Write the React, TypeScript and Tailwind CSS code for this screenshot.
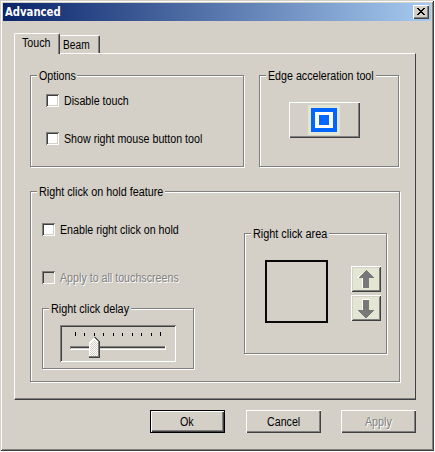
import type { ReactNode } from "react";
import clsx from "clsx";

const raised =
  "shadow-[inset_1px_1px_0_#fff,inset_-1px_-1px_0_#404040,inset_-2px_-2px_0_#808080]";

function Label({
  children,
  scale = "scale-x-[0.89]",
  disabled,
}: {
  children: string;
  scale?: string;
  disabled?: boolean;
}) {
  return (
    <span
      className={clsx(
        "block origin-left whitespace-nowrap leading-[14px]",
        scale,
        disabled && "text-[#808080] [text-shadow:1px_1px_0_#fff]",
      )}
    >
      {children}
    </span>
  );
}

function GroupBox({
  title,
  titleWidth,
  titleScale,
  className,
  children,
}: {
  title: string;
  titleWidth: string;
  titleScale?: string;
  className: string;
  children?: ReactNode;
}) {
  return (
    <fieldset
      className={clsx(
        "relative shrink-0 border border-[#808080] shadow-[1px_1px_0_#fff,inset_1px_1px_0_#fff]",
        className,
      )}
    >
      <div
        className={clsx(
          "absolute -top-[7px] left-[6px] h-[14px] bg-[#d4d0c8] pl-[2px]",
          titleWidth,
        )}
      >
        <Label scale={titleScale}>{title}</Label>
      </div>
      {children}
    </fieldset>
  );
}

function Checkbox({ label, disabled }: { label: string; disabled?: boolean }) {
  return (
    <label className="flex h-[14px] items-start gap-[5px]">
      <span
        className={clsx(
          "size-[13px] shrink-0 shadow-[inset_1px_1px_0_#808080,inset_-1px_-1px_0_#fff,inset_2px_2px_0_#404040,inset_-2px_-2px_0_#d4d0c8]",
          disabled ? "bg-[#d4d0c8]" : "bg-white",
        )}
      />
      <Label disabled={disabled}>{label}</Label>
    </label>
  );
}

function ArrowButton({ down }: { down?: boolean }) {
  return (
    <button className="flex h-[26px] w-[30px] items-center justify-center bg-[#e4e6d4] shadow-[inset_1px_1px_0_#fff,inset_-1px_-1px_0_#404040,inset_2px_2px_0_#d4d0c8,inset_-2px_-2px_0_#808080]">
      <svg
        width="30"
        height="26"
        viewBox="0 0 30 26"
        shapeRendering="crispEdges"
      >
        {down ? (
          <>
            <path d="M11 4h7v11h5l-8 8-8-8h4z" fill="#fff" />
            <path d="M12 5h6v10h5l-8 9-8-9h5z" fill="#787878" />
          </>
        ) : (
          <>
            <path d="M14 3l-8 9h5v10h1V11H8z" fill="#fff" />
            <path d="M15 4l8 8h-5v10h-6V12H7z" fill="#787878" />
          </>
        )}
      </svg>
    </button>
  );
}

function DelaySlider() {
  const ticks = [75, 84, 94, 103, 113, 122, 132, 141, 151, 160];
  return (
    <div className="ml-[17px] mt-[16px] h-[37px] w-[116px] shadow-[inset_1px_1px_0_#808080,inset_-1px_-1px_0_#fff,inset_2px_2px_0_#404040]">
      <svg
        width="116"
        height="37"
        viewBox="60 325 116 37"
        shapeRendering="crispEdges"
      >
        {ticks.map((x, i) => {
          const end = i === 0 || i === ticks.length - 1;
          return (
            <rect
              key={x}
              x={x}
              y={end ? 332 : 333}
              width="1"
              height={end ? 4 : 3}
            />
          );
        })}
        <path d="M70 346h96v4H70z" fill="#fff" />
        <path d="M70 346h95v3H70z" fill="#808080" />
        <path d="M71 347h94v1H71z" fill="#404040" />
        <path d="M71 348h94v1H71z" fill="#d4d0c8" />
        <defs>
          <pattern
            id="dither"
            width="2"
            height="2"
            patternUnits="userSpaceOnUse"
          >
            <path d="M0 0h2v2H0z" fill="#fff" />
            <path d="M0 0h1v1H0zM1 1h1v1H1z" fill="#d4d0c8" />
          </pattern>
        </defs>
        <path d="M89 342l5-5h1l5 5v16H89z" fill="#404040" />
        <path d="M89 342l5-5 5 5v15H89z" fill="#808080" />
        <path d="M89 342l5-5 4 5v14H89z" fill="#fff" />
        <path d="M90 343l4-4 4 4v13h-8z" fill="url(#dither)" />
      </svg>
    </div>
  );
}

function PushButton({
  label,
  isDefault,
  disabled,
  pad,
}: {
  label: string;
  isDefault?: boolean;
  disabled?: boolean;
  pad: string;
}) {
  return (
    <button
      className={clsx(
        "h-[23px] w-[75px] text-left",
        pad,
        isDefault
          ? "shadow-[inset_0_0_0_1px_#000,inset_2px_2px_0_#fff,inset_-2px_-2px_0_#404040,inset_-3px_-3px_0_#808080]"
          : raised,
      )}
    >
      <Label disabled={disabled}>{label}</Label>
    </button>
  );
}

export default function App() {
  return (
    <div className="h-[451px] w-[434px] bg-[#d4d0c8] p-[3px] font-['Liberation_Sans',Arial,sans-serif] text-[12px] text-black shadow-[inset_1px_1px_0_#d4d0c8,inset_-1px_-1px_0_#404040,inset_2px_2px_0_#fff,inset_-2px_-2px_0_#808080]">
      {/* Title bar */}
      <div className="flex h-[18px] items-center justify-between bg-linear-to-r/srgb from-[#0a246a] to-[#a6caf0] pl-[2px] pr-[2px]">
        <span className="block origin-left scale-x-[0.84] font-['DejaVu_Sans',sans-serif] text-[12px] font-bold leading-[18px] text-white">
          Advanced
        </span>
        <button
          className={clsx(
            "flex h-[14px] w-[16px] items-start bg-[#d4d0c8] pl-[4px] pt-[3px]",
            raised,
          )}
        >
          <svg
            width="8"
            height="7"
            viewBox="0 0 8 7"
            shapeRendering="crispEdges"
          >
            <path d="M0 0h2v1H0zM6 0h2v1H6zM1 1h2v1H1zM5 1h2v1H5zM2 2h4v1H2zM3 3h2v1H3zM2 4h4v1H2zM1 5h2v1H1zM5 5h2v1H5zM0 6h2v1H0zM6 6h2v1H6z" />
          </svg>
        </button>
      </div>

      {/* Tabs */}
      <div className="ml-[11px] mt-[12px] flex h-[20px] items-end">
        <div className="relative z-10 -mb-px h-[21px] w-[46px] rounded-t-[2px] border-l border-r border-t border-l-white border-r-[#404040] border-t-white bg-[#d4d0c8] pl-[7px] pt-[2px] shadow-[inset_-1px_0_0_#808080]">
          <Label>Touch</Label>
        </div>
        <div className="h-[18px] w-[40px] rounded-tr-[2px] border-r border-t border-r-[#404040] border-t-white pl-[3px] pt-[2px] shadow-[inset_-1px_0_0_#808080]">
          <Label scale="scale-x-[0.85]">Beam</Label>
        </div>
      </div>

      {/* Tab page */}
      <div className="ml-[11px] h-[347px] w-[402px] border border-b-[#404040] border-l-white border-r-[#404040] border-t-white pl-[15px] pt-[21px] shadow-[inset_0_-1px_0_#808080]">
        <div className="flex gap-[15px]">
          <GroupBox
            title="Options"
            titleWidth="w-[40px]"
            className="h-[92px] w-[214px] pl-[15px] pt-[18px]"
          >
            <div className="flex flex-col gap-[24px]">
              <Checkbox label="Disable touch" />
              <Checkbox label="Show right mouse button tool" />
            </div>
          </GroupBox>
          <GroupBox
            title="Edge acceleration tool"
            titleWidth="w-[110px]"
            className="h-[92px] w-[140px] pl-[29px] pt-[26px]"
          >
            <button
              className={clsx(
                "flex h-[36px] w-[71px] items-start pl-[19px] pt-[3px]",
                raised,
              )}
            >
              <svg
                width="32"
                height="30"
                viewBox="0 0 32 30"
                shapeRendering="crispEdges"
              >
                <path d="M0 0h32v30H0z" fill="#e4e6d4" />
                <path d="M3 3h26v24H3z" fill="#0066ff" />
                <path d="M7 7h18v16H7z" fill="#fff" />
                <path d="M11 10h10v10H11z" fill="#0066ff" />
              </svg>
            </button>
          </GroupBox>
        </div>

        <GroupBox
          title="Right click on hold feature"
          titleWidth="w-[128px]"
          titleScale="scale-x-[0.9]"
          className="mt-[24px] flex h-[191px] w-[370px] gap-[50px] pl-[11px]"
        >
          <div className="w-[152px] pt-[31px]">
            <Checkbox label="Enable right click on hold" />
            <div className="mt-[34px]">
              <Checkbox label="Apply to all touchscreens" disabled />
            </div>
            <GroupBox
              title="Right click delay"
              titleWidth="w-[82px]"
              titleScale="scale-x-[0.9]"
              className="mt-[23px] h-[61px] w-[152px]"
            >
              <DelaySlider />
            </GroupBox>
          </div>
          <GroupBox
            title="Right click area"
            titleWidth="w-[78px]"
            titleScale="scale-x-[0.905]"
            className="mt-[41px] flex h-[121px] w-[143px] gap-[23px] pl-[20px] pt-[26px]"
          >
            <div className="size-[63px] border-2 border-[#080808]" />
            <div className="flex flex-col gap-[3px] pt-[6px]">
              <ArrowButton />
              <ArrowButton down />
            </div>
          </GroupBox>
        </GroupBox>
      </div>

      {/* Dialog buttons */}
      <div className="mt-[10px] flex pl-[147px]">
        <PushButton label="Ok" pad="pl-[30px]" isDefault />
        <div className="w-[21px]" />
        <PushButton label="Cancel" pad="pl-[21px]" />
        <div className="w-[20px]" />
        <PushButton label="Apply" pad="pl-[24px]" disabled />
      </div>
    </div>
  );
}
